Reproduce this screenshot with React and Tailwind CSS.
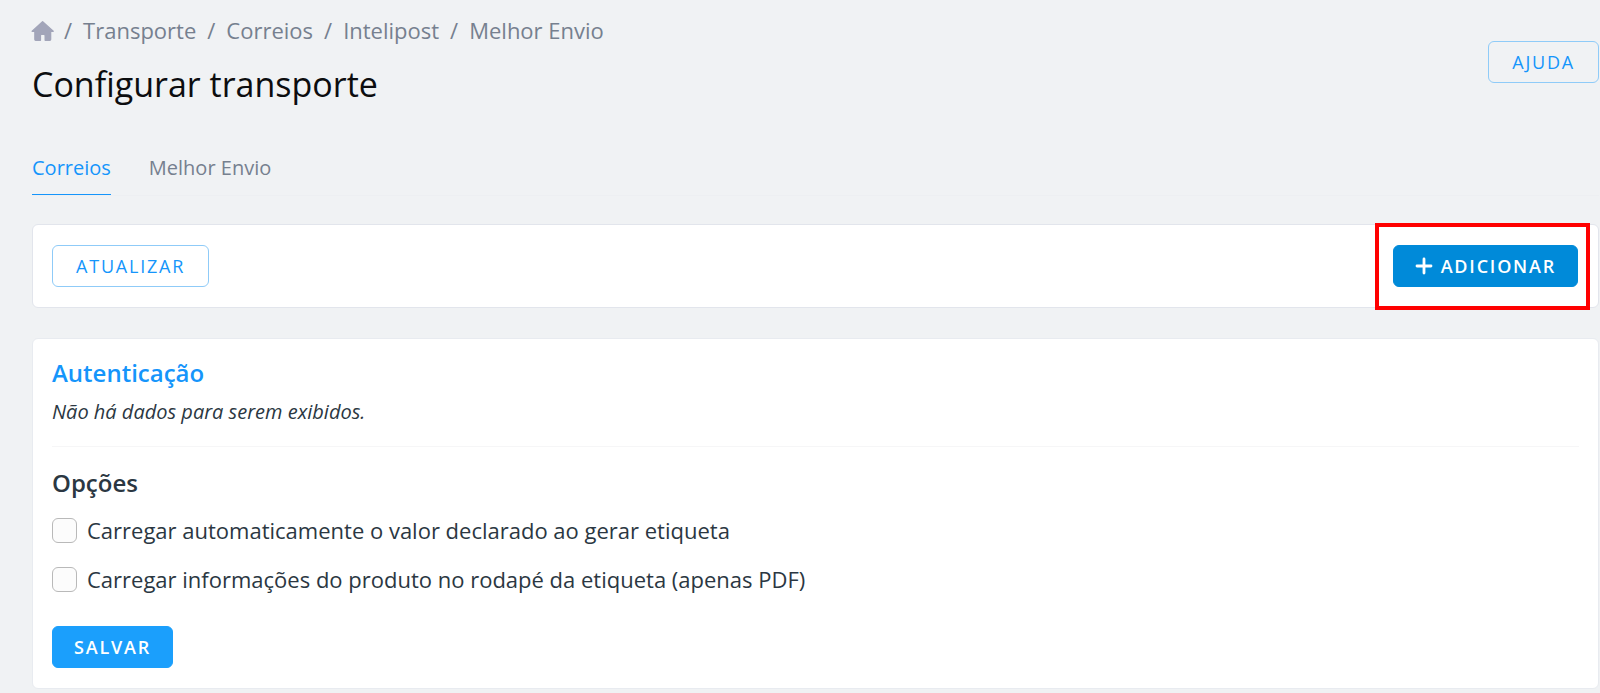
import { useState } from 'react'

const crumbs = ['Transporte', 'Correios', 'Intelipost', 'Melhor Envio']
const tabs = ['Correios', 'Melhor Envio']

const baseButton = 'flex items-center h-[42px] rounded-md text-lg leading-6 uppercase tracking-widest border'
const variants = {
  outline: 'px-[23px] border-[#8fcbf8] text-[#1595fb] hover:bg-sky-50',
  solid: 'px-[21px] border-[#1b9ffc] bg-[#1b9ffc] text-white font-semibold hover:bg-[#008ad9]',
  active: 'px-[21px] border-[#008ad9] bg-[#008ad9] text-white font-semibold gap-2',
}

// ── Icons ────────────────────────────────────────────────────────────────────
function HomeIcon() {
  return (
    <svg width="24" height="26" viewBox="0 -2 24 26" fill="currentColor" stroke="currentColor" strokeWidth="1.4" strokeLinejoin="round" aria-hidden="true">
      <path d="M11.6 2.8 1.2 12.2H3.9V20.6Q3.9 21.3 4.6 21.3H9.4V16.6Q9.4 15.4 10.4 15.4H13Q14.2 15.4 14.2 16.6V21.3H18.9Q19.6 21.3 19.6 20.6V12.2H22.2Z" />
    </svg>
  )
}

function PlusIcon() {
  return (
    <svg width="18" height="18" viewBox="0 0 18 18" fill="none" stroke="currentColor" strokeWidth="2.8" strokeLinecap="round" aria-hidden="true">
      <path d="M9 2V16M2 9H16" />
    </svg>
  )
}

function Button({ variant = 'outline', children, ...props }) {
  return (
    <button type="button" className={`${baseButton} ${variants[variant]}`} {...props}>
      {children}
    </button>
  )
}

function Option({ id, label, checked, onChange }) {
  return (
    <div className="flex items-center gap-[10px]">
      <input
        id={id}
        type="checkbox"
        checked={checked}
        onChange={onChange}
        className="appearance-none w-[25px] h-[25px] rounded-md border border-[#b9b9b9] bg-[#fcfcfc] checked:bg-[#1b9ffc]"
      />
      <label htmlFor={id} className="text-[22px] leading-[30px]">{label}</label>
    </div>
  )
}

export default function App() {
  const [tab, setTab] = useState('Correios')
  const [options, setOptions] = useState({ declaredValue: false, productInfo: false })

  const toggle = (key) => setOptions({ ...options, [key]: !options[key] })

  return (
    <div className="min-h-screen bg-[#f0f2f4] pl-8 pr-px pt-[15px] pb-1 font-['Open_Sans',sans-serif] text-[#2b3742]">

      {/* Header */}
      <header className="flex justify-between items-start">
        <div>
          <nav aria-label="Breadcrumb" className="flex items-center gap-[11px] text-[22px] leading-[30px] text-[#76808f]">
            <a href="#" aria-label="Início" className="-ml-px -mr-[2px] text-[#a2a5b9]">
              <HomeIcon />
            </a>
            {crumbs.map((crumb) => (
              <span key={crumb} className="flex gap-[11px]">
                <span>/</span>
                <a href="#">{crumb}</a>
              </span>
            ))}
          </nav>
          <h1 className="mt-[13px] text-[34px] leading-[52px] text-[#0c0d0f]">Configurar transporte</h1>
        </div>
        <div className="mt-[26px]">
          <Button>Ajuda</Button>
        </div>
      </header>

      {/* Tabs */}
      <div role="tablist" className="mt-10 flex gap-[38px] border-b border-[#edeff2]">
        {tabs.map((name) => (
          <button
            key={name}
            type="button"
            role="tab"
            aria-selected={tab === name}
            onClick={() => setTab(name)}
            className={`pt-1 pb-3 text-xl leading-7 border-b ${tab === name ? 'border-[#1595fb] text-[#1595fb]' : 'border-transparent text-[#76808f]'}`}
          >
            {name}
          </button>
        ))}
      </div>

      {/* Toolbar */}
      <section className="mt-7 flex items-center justify-between rounded-md border border-[#e2e5ec] bg-white pl-[19px] pr-5 py-5">
        <Button>Atualizar</Button>
        <div className="relative">
          <Button variant="active">
            <PlusIcon />
            Adicionar
          </Button>
          <div className="pointer-events-none absolute -left-[18px] -right-3 -top-[22px] -bottom-[23px] border-4 border-[#ff0000]" />
        </div>
      </section>

      {/* Settings */}
      <section className="mt-[30px] rounded-md border border-[#e8ebf0] bg-white px-[19px] pt-[18px] pb-5">
        <h2 className="text-2xl leading-8 font-semibold text-[#1595fb]">Autenticação</h2>
        <p className="mt-[9px] text-xl leading-7 italic">Não há dados para serem exibidos.</p>
        <hr className="mt-5 border-[#f6f6f7]" />
        <h2 className="mt-5 text-2xl leading-8 font-semibold">Opções</h2>
        <div className="mt-4 mb-8 flex flex-col gap-[19px]">
          <Option
            id="declared-value"
            label="Carregar automaticamente o valor declarado ao gerar etiqueta"
            checked={options.declaredValue}
            onChange={() => toggle('declaredValue')}
          />
          <Option
            id="product-info"
            label="Carregar informações do produto no rodapé da etiqueta (apenas PDF)"
            checked={options.productInfo}
            onChange={() => toggle('productInfo')}
          />
        </div>
        <Button variant="solid">Salvar</Button>
      </section>
    </div>
  )
}
